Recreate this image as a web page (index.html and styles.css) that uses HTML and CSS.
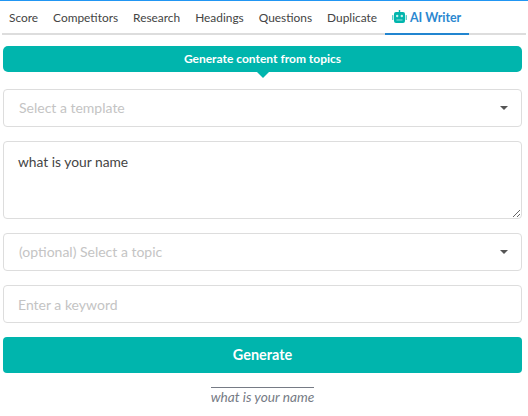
FILE: index.html
```html
<!DOCTYPE html>
<html lang="en">
<head>
    <meta charset="UTF-8">
    <meta name="viewport" content="width=device-width, initial-scale=1.0">
    <title>AI Writer</title>
    <link rel="stylesheet" href="styles.css">
</head>
<body>
    <div class="tabs">
        <a class="tab">Score</a>
        <a class="tab">Competitors</a>
        <a class="tab">Research</a>
        <a class="tab">Headings</a>
        <a class="tab">Questions</a>
        <a class="tab">Duplicate</a>
        <a class="tab tab-active">
            <svg class="robot" viewBox="0 0 15 13" width="15" height="13">
                <rect x="6.8" y="0" width="1.4" height="2" fill="#00b5ad"/>
                <rect x="2" y="2" width="11" height="11" rx="2" fill="#00b5ad"/>
                <rect x="0" y="5" width="1.4" height="5" rx="0.5" fill="#5fd0ca"/>
                <rect x="13.6" y="5" width="1.4" height="5" rx="0.5" fill="#5fd0ca"/>
                <circle cx="5.2" cy="6" r="1.2" fill="#c6f0ed"/>
                <circle cx="9.8" cy="6" r="1.2" fill="#c6f0ed"/>
                <rect x="4.5" y="9.5" width="6" height="1" fill="#8fe0db"/>
            </svg>
            AI Writer
        </a>
    </div>

    <div class="content">
        <div class="banner">Generate content from topics</div>

        <div class="select-box">
            <select class="field select-field">
                <option>Select a template</option>
            </select>
        </div>

        <textarea class="field text-field">what is your name</textarea>

        <div class="select-box">
            <select class="field select-field">
                <option>(optional) Select a topic</option>
            </select>
        </div>

        <input class="field input-field" type="text" placeholder="Enter a keyword">

        <button class="generate">Generate</button>

        <div class="caption"><span>what is your name</span></div>
    </div>
</body>
</html>
```

FILE: styles.css
```css
* {
    box-sizing: border-box;
}
body {
    margin: 0;
    padding: 0;
    background-color: #FFF;
    font-family: Lato, "Open Sans", sans-serif;
    border-top: 1px solid #2196f3;
}
.tabs {
    display: flex;
    height: 34px;
    margin: 0 2px;
    gap: 1px;
    border-bottom: 2px solid #ddd;
}
.tab {
    height: 34px;
    padding: 9px 7px 0;
    font-size: 11.9px;
    line-height: 15px;
    color: #444;
    white-space: nowrap;
}
.tab-active {
    display: flex;
    align-items: flex-start;
    gap: 3px;
    padding-right: 8px;
    font-size: 12.4px;
    font-weight: bold;
    color: #2a87d0;
    border-bottom: 2px solid #2185d0;
}
.content {
    display: flex;
    flex-direction: column;
    padding: 11px 6px 0 3px;
}
.banner {
    position: relative;
    height: 26px;
    margin-bottom: 17px;
    background-color: #00b5ad;
    border-radius: 5px;
    color: #FFF;
    font-size: 12px;
    font-weight: bold;
    line-height: 25px;
    text-align: center;
}
.banner:after {
    content: "";
    position: absolute;
    left: 50%;
    bottom: -6px;
    margin-left: -6px;
    border-left: 6px solid transparent;
    border-right: 6px solid transparent;
    border-top: 6px solid #00b5ad;
}
.field {
    display: block;
    width: 100%;
    height: 38px;
    margin: 0 0 14px;
    padding: 0 15px 2px;
    background: #FFF;
    border: 1px solid #ddd;
    border-radius: 4px;
    outline: none;
    font-family: inherit;
    font-size: 14px;
    color: #444;
}
.field::placeholder {
    color: #c4c4c4;
    opacity: 1;
}
.input-field {
    padding: 0 14px;
}
.select-box {
    position: relative;
}
.select-box:after {
    content: "";
    position: absolute;
    right: 14px;
    top: 17px;
    border-left: 4px solid transparent;
    border-right: 4px solid transparent;
    border-top: 4px solid #555;
}
.select-field {
    appearance: none;
    color: #c4c4c4;
}
.text-field {
    height: 78px;
    padding: 10px 14px;
    line-height: 20px;
    font-size: 13.8px;
}
.generate {
    height: 36px;
    padding: 0 0 2px;
    background-color: #00b5ad;
    border: none;
    border-radius: 4px;
    color: #FFF;
    font-family: inherit;
    font-size: 14.4px;
    font-weight: bold;
}
.caption {
    margin-top: 13px;
    text-align: center;
}
.caption span {
    display: inline-block;
    border-top: 1px solid #767b85;
    font-size: 13.7px;
    font-style: italic;
    line-height: 18px;
    color: #767b85;
}
```
